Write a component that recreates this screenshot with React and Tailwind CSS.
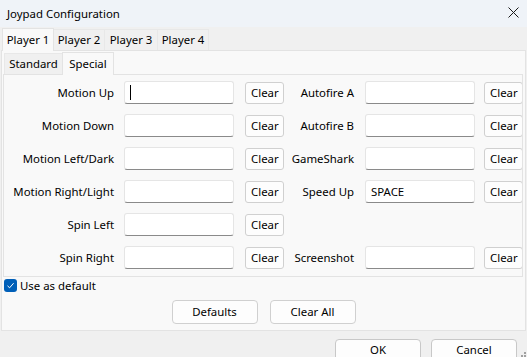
import React from "react";

const LEFT = [
  { label: "Motion Up", value: "", caret: true },
  { label: "Motion Down", value: "" },
  { label: "Motion Left/Dark", value: "" },
  { label: "Motion Right/Light", value: "" },
  { label: "Spin Left", value: "" },
  { label: "Spin Right", value: "" },
];

const RIGHT = [
  { label: "Autofire A", value: "" },
  { label: "Autofire B", value: "" },
  { label: "GameShark", value: "" },
  { label: "Speed Up", value: "SPACE" },
  null,
  { label: "Screenshot", value: "" },
];

function KeyBox({ value, caret }) {
  return (
    <div className="flex h-[23px] w-[110px] items-center rounded-[3px] border border-[#e5e5e5] border-b-[#8a8a8a] bg-white px-[5px]">
      {caret && <span className="h-[15px] w-px bg-black" />}
      {value}
    </div>
  );
}

function ClearBtn() {
  return (
    <button className="h-[22px] w-[39px] shrink-0 whitespace-nowrap rounded-[3px] border border-[#d0d0d0] bg-[#fdfdfd] pl-[5px] text-left">
      Clear
    </button>
  );
}

function Row({ left, right }) {
  return (
    <div className="flex h-[33px] items-center">
      <div className="w-[110px] shrink-0 text-right">{left.label}</div>
      <div className="ml-[10px]">
        <KeyBox value={left.value} caret={left.caret} />
      </div>
      <div className="ml-[11px]">
        <ClearBtn />
      </div>
      {right && (
        <>
          <div className="w-[70px] shrink-0 text-right">{right.label}</div>
          <div className="ml-[11px]">
            <KeyBox value={right.value} />
          </div>
          <div className="ml-[9px]">
            <ClearBtn />
          </div>
        </>
      )}
    </div>
  );
}

export default function App() {
  return (
    <div
      className="flex h-[357px] w-[527px] flex-col overflow-hidden bg-[#f0f0f0] text-[11.4px] text-black"
      style={{ fontFamily: '"Noto Sans", "Segoe UI", sans-serif' }}
    >
      {/* title bar */}
      <div className="flex h-[27px] shrink-0 items-center justify-between bg-[#eff3f8] pl-[7px] pr-[8px]">
        <span>Joypad Configuration</span>
        <svg width="11" height="11" viewBox="0 0 11 11" className="mt-[-2px]">
          <path d="M0.5 0.5 L10.5 10.5 M10.5 0.5 L0.5 10.5" stroke="#1a1a1a" strokeWidth="1" />
        </svg>
      </div>

      {/* player tabs */}
      <div className="flex h-[23px] shrink-0 items-end pl-[2px]">
        <div className="z-10 mb-[-1px] flex h-[23px] w-[52px] items-center justify-center border border-b-0 border-[#e3e3e3] bg-[#f9f9f9]">
          Player 1
        </div>
        {["Player 2", "Player 3", "Player 4"].map((p, i) => (
          <div
            key={p}
            className={`flex h-[21px] items-center justify-center border border-l-0 border-b-0 border-[#e8e8e8] bg-[#f0f0f0] ${
              i === 0 ? "w-[51px]" : i === 1 ? "w-[53px]" : "w-[51px]"
            }`}
          >
            {p}
          </div>
        ))}
      </div>

      {/* player panel */}
      <div className="mx-[1px] flex h-[281px] shrink-0 flex-col border border-[#e3e3e3] bg-[#f9f9f9] pr-[2px]">
        <div className="flex h-[23px] shrink-0 items-end pl-[2px] pt-[1px]">
          <div className="flex h-[21px] w-[58px] items-center justify-center border border-r-0 border-b-0 border-[#e8e8e8] bg-[#f0f0f0]">
            Standard
          </div>
          <div className="z-10 mb-[-1px] flex h-[23px] w-[52px] items-center justify-center border border-b-0 border-[#e3e3e3] bg-[#f9f9f9]">
            Special
          </div>
        </div>
        <div className="ml-[1px] h-[203px] shrink-0 overflow-hidden border border-[#e3e3e3] pt-[1px]">
          {LEFT.map((l, i) => (
            <Row key={l.label} left={l} right={RIGHT[i]} />
          ))}
        </div>
        <label className="mt-[2px] flex h-[13px] items-center pl-[2px]">
          <span className="flex h-[13px] w-[13px] items-center justify-center rounded-[3px] bg-[#005fb8]">
            <svg width="9" height="9" viewBox="0 0 9 9">
              <path d="M1.5 4.8 L3.6 6.8 L7.6 2.2" fill="none" stroke="white" strokeWidth="1" />
            </svg>
          </span>
          <span className="ml-[3px]">Use as default</span>
        </label>
        <div className="mt-[8px] flex justify-center gap-[12px] pl-[2px]">
          <button className="h-[24px] w-[86px] rounded-[4px] border border-[#d0d0d0] bg-[#fdfdfd]">
            Defaults
          </button>
          <button className="h-[24px] w-[86px] rounded-[4px] border border-[#d0d0d0] bg-[#fdfdfd]">
            Clear All
          </button>
        </div>
      </div>

      {/* bottom bar */}
      <div className="relative flex flex-1 items-start justify-end gap-[10px] pr-[10px] pt-[8px]">
        <button className="h-[22px] w-[86px] rounded-[4px] border border-[#c8c8c8] bg-[#fdfdfd] leading-[20px]">
          OK
        </button>
        <button className="h-[22px] w-[86px] rounded-[4px] border border-[#c8c8c8] bg-[#fdfdfd] leading-[20px]">
          Cancel
        </button>
        <svg width="8" height="8" viewBox="0 0 8 8" className="absolute bottom-[1px] right-[1px]">
          <g fill="#a0a0a0">
            <rect x="6" y="0" width="2" height="2" />
            <rect x="3" y="3" width="2" height="2" />
            <rect x="6" y="3" width="2" height="2" />
            <rect x="0" y="6" width="2" height="2" />
            <rect x="3" y="6" width="2" height="2" />
            <rect x="6" y="6" width="2" height="2" />
          </g>
        </svg>
      </div>
    </div>
  );
}
